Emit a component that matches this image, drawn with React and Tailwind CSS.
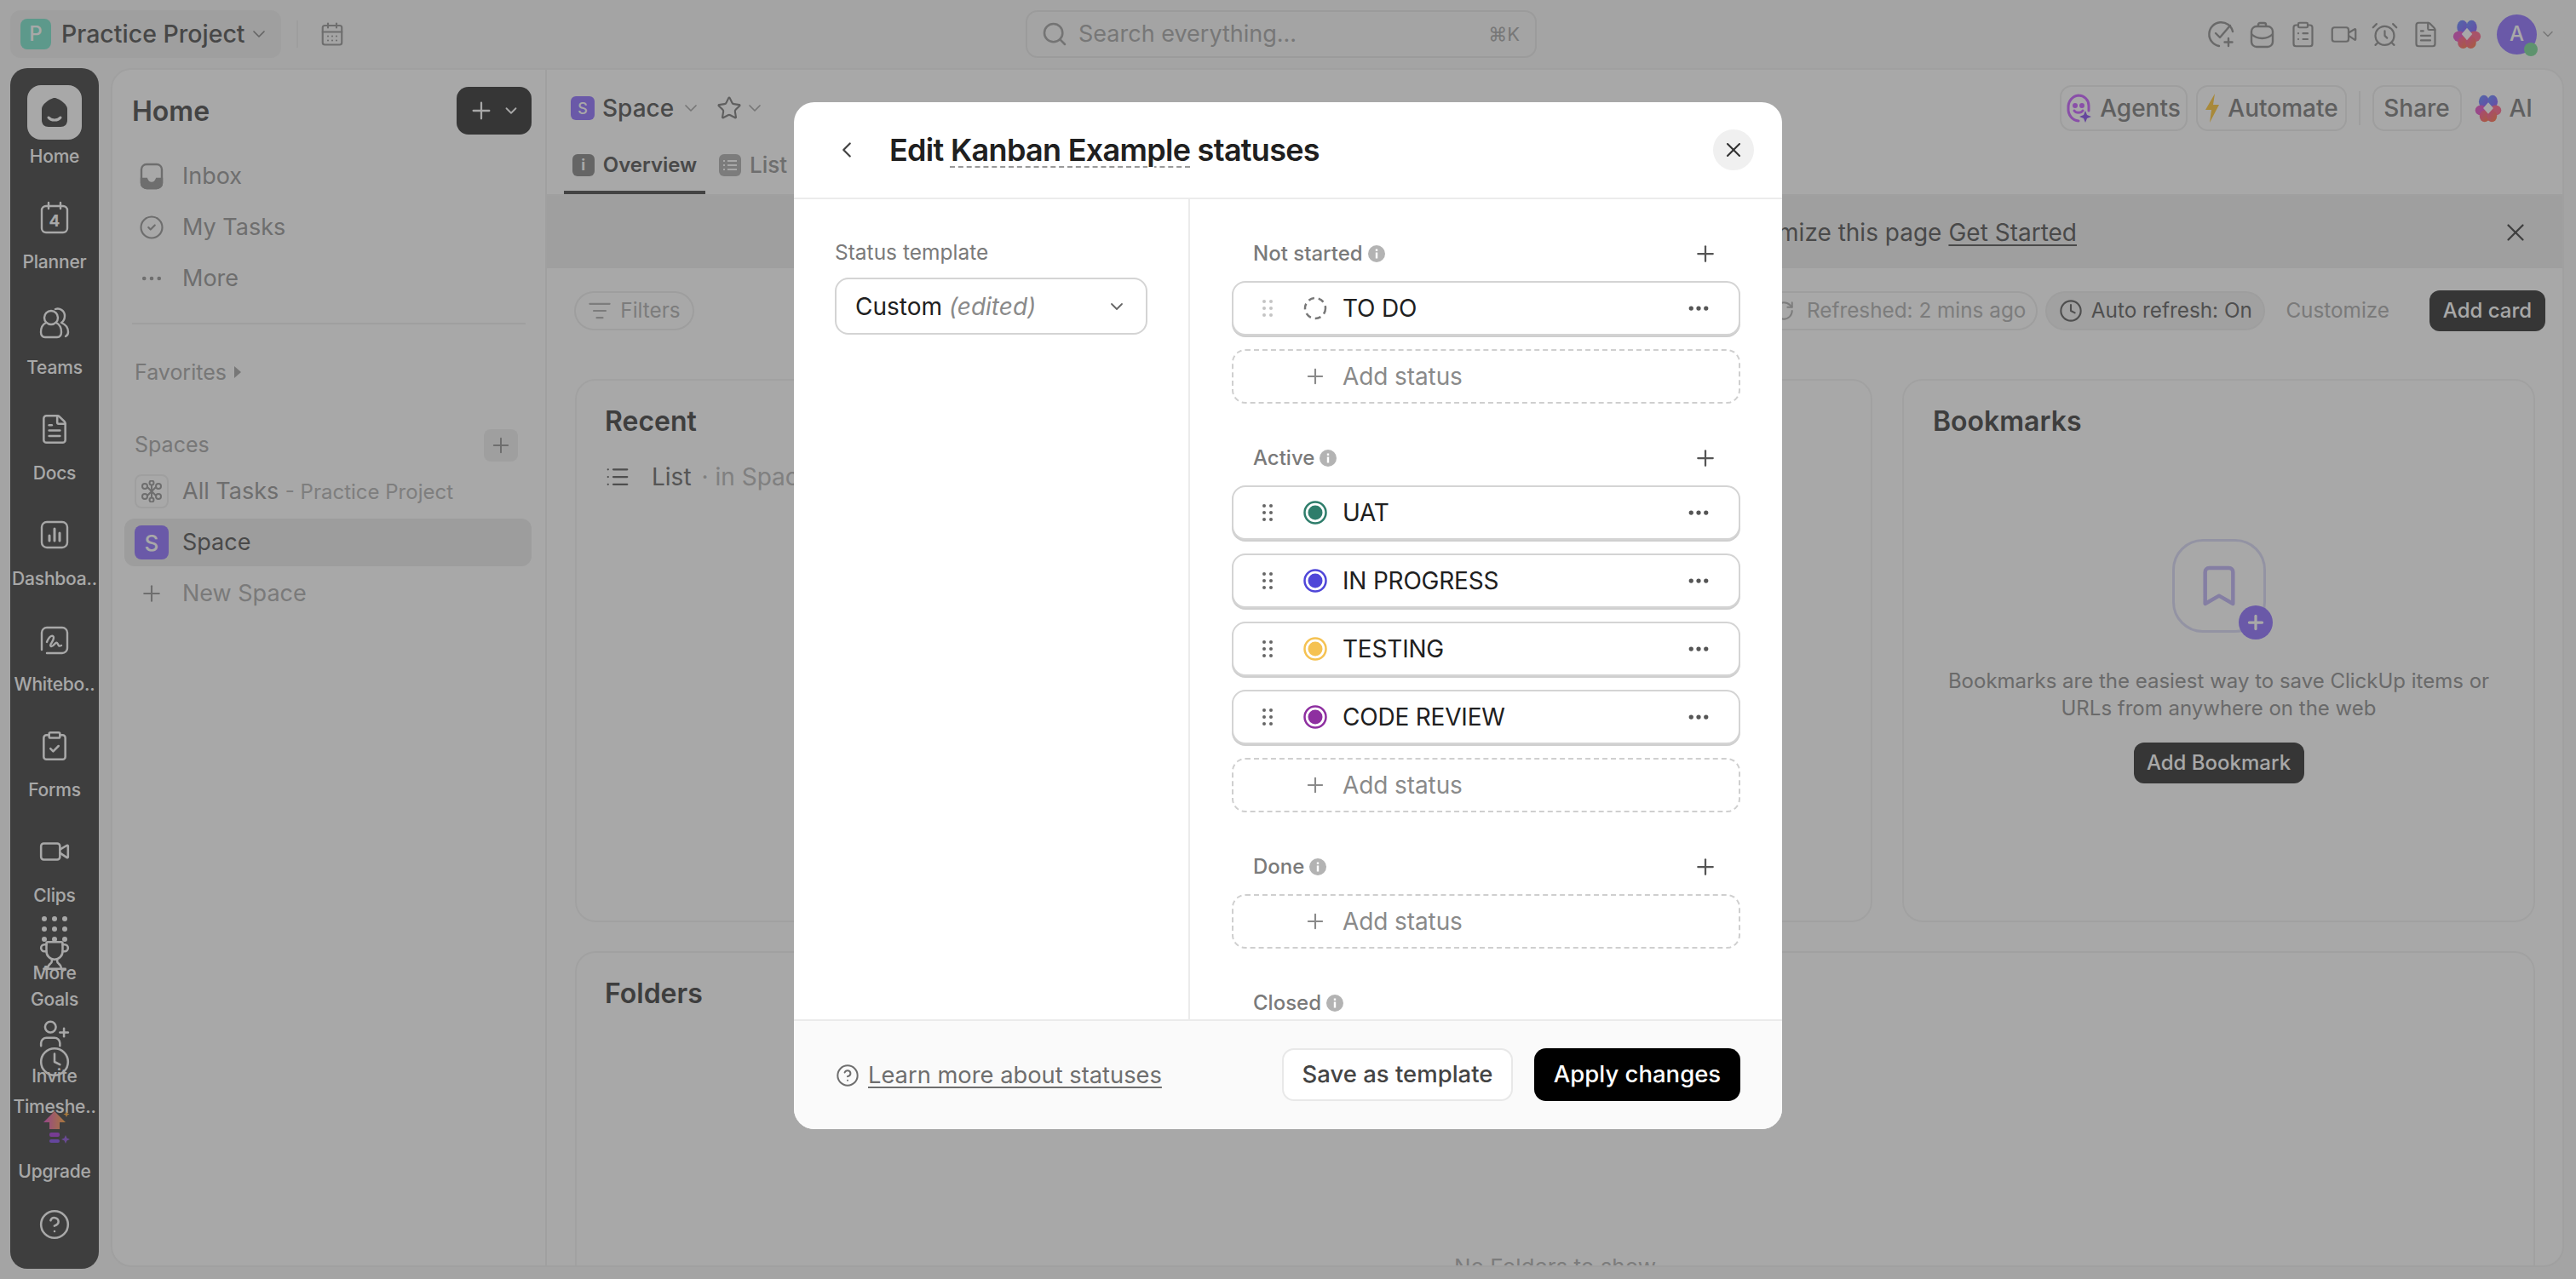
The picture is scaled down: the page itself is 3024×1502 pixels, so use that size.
import React from 'react';
import {
  AlarmClock, Bookmark, CalendarDays, ChevronDown, ChevronLeft, CircleHelp, ClipboardCheck, ClipboardList, Clock,
  Ellipsis, FileText, CircleCheck, List, ListFilter, Plus, RefreshCw, Search, Star, Trophy, UserPlus, Video, X,
} from 'lucide-react';

function Flower({ size = 36, id = 'a' }) {
  return (
    <svg width={size} height={size} viewBox="0 0 40 40">
      <defs>
        <linearGradient id={`${id}1`} x1="0" y1="0" x2="1" y2="1"><stop offset="0" stopColor="#7aa0ff" /><stop offset="1" stopColor="#a070ff" /></linearGradient>
        <linearGradient id={`${id}2`} x1="0" y1="0" x2="1" y2="1"><stop offset="0" stopColor="#ff6fb5" /><stop offset="1" stopColor="#ff8f5a" /></linearGradient>
      </defs>
      <ellipse cx="14" cy="11" rx="7" ry="9" fill={`url(#${id}1)`} />
      <ellipse cx="26" cy="11" rx="7" ry="9" fill={`url(#${id}1)`} />
      <ellipse cx="10" cy="23" rx="8" ry="7" fill="#e86fd0" />
      <ellipse cx="30" cy="23" rx="8" ry="7" fill="#ff7fa0" />
      <ellipse cx="15" cy="31" rx="7" ry="8" fill={`url(#${id}2)`} />
      <ellipse cx="25" cy="31" rx="7" ry="8" fill={`url(#${id}2)`} />
      <path d="M20 12 L27 20 L20 28 L13 20 Z" fill="#ffffff" />
    </svg>
  );
}

function RailLabel({ children, className = '' }) {
  return <div className={`h-7 w-full overflow-hidden whitespace-nowrap text-center text-[21px] font-medium leading-7 tracking-[-0.2px] text-white ${className}`}>{children}</div>;
}

function RailItem({ icon, label }) {
  return (
    <div className="flex h-[124px] flex-col items-center">
      <div className="flex h-16 w-16 items-center justify-center">{icon}</div>
      <RailLabel className="mt-[6px]">{label}</RailLabel>
    </div>
  );
}

function RailFloat({ icon, label, className, gap = 'mt-[18px]' }) {
  return (
    <div className={`absolute left-0 flex w-full flex-col items-center ${className}`}>
      <div className="flex h-10 items-center justify-center">{icon}</div>
      {label && <RailLabel className={gap}>{label}</RailLabel>}
    </div>
  );
}

const railIcon = { size: 38, strokeWidth: 1.6, color: '#ffffff' };

function Rail() {
  return (
    <aside className="relative h-[1410px] w-[104px] shrink-0 rounded-[20px] bg-[#5f5f5f] pt-5">
      <div className="flex h-[124px] flex-col items-center">
        <div className="flex h-16 w-16 items-center justify-center rounded-2xl bg-white">
          <svg width="38" height="38" viewBox="0 0 38 38">
            <path d="M19 2 C23 2 34 9 34 15 V28 C34 33 31 36 26 36 H12 C7 36 4 33 4 28 V15 C4 9 15 2 19 2 Z" fill="#5f5f5f" />
            <path d="M12 25 C15 29 23 29 26 25" fill="none" stroke="#ffffff" strokeWidth="3" strokeLinecap="round" />
          </svg>
        </div>
        <RailLabel className="mt-[6px]">Home</RailLabel>
      </div>
      <RailItem
        label="Planner"
        icon={
          <svg width="36" height="40" viewBox="0 0 36 40" fill="none" stroke="#fff" strokeWidth="2.4">
            <rect x="3" y="6" width="30" height="31" rx="5" />
            <path d="M11 2v7M25 2v7" strokeLinecap="round" />
            <text x="18" y="30" textAnchor="middle" fontSize="19" fontWeight="700" fill="#fff" stroke="none" fontFamily="Inter, sans-serif">4</text>
          </svg>
        }
      />
      <RailItem
        label="Teams"
        icon={
          <svg width="36" height="40" viewBox="0 0 36 40" fill="none" stroke="#fff" strokeWidth="2.4" strokeLinecap="round" strokeLinejoin="round">
            <circle cx="14" cy="13" r="8" />
            <path d="M8 19c-4 2-6 6-6 11 0 4 2 6 5 6h14c3 0 5-2 5-6 0-5-2-9-6-11" />
            <path d="M19 3c5-2 11 2 11 8 0 3-1 6-4 8 5 2 8 6 8 11 0 2-1 4-3 5" />
          </svg>
        }
      />
      <RailItem label="Docs" icon={<FileText {...railIcon} />} />
      <RailItem
        label="Dashboa.."
        icon={
          <svg width="36" height="36" viewBox="0 0 36 36" fill="none" stroke="#fff" strokeWidth="2.4" strokeLinecap="round">
            <rect x="3" y="3" width="30" height="30" rx="6" />
            <path d="M12 25v-6M18 25V11M24 25v-9" strokeWidth="3" />
          </svg>
        }
      />
      <RailItem
        label="Whitebo.."
        icon={
          <svg width="36" height="36" viewBox="0 0 36 36" fill="none" stroke="#fff" strokeWidth="2.4" strokeLinecap="round">
            <path d="M3 29V9a6 6 0 0 1 6-6h18a6 6 0 0 1 6 6v18a6 6 0 0 1-6 6H9" />
            <path d="M9 20c3-8 8-9 8-5s-6 9-3 10 5-6 7-4 1 5 5 3" />
          </svg>
        }
      />
      <RailItem label="Forms" icon={<ClipboardCheck {...railIcon} />} />
      <RailItem label="Clips" icon={<Video {...railIcon} />} />

      <RailFloat
        className="top-[991px]"
        label="More"
        icon={
          <svg width="30" height="30" viewBox="0 0 30 30" fill="#fff">
            {[3, 15, 27].flatMap((y) => [3, 15, 27].map((x) => <circle key={`${x}-${y}`} cx={x} cy={y} r="3" />))}
          </svg>
        }
      />
      <RailFloat className="top-[1022px]" label="Goals" icon={<Trophy {...railIcon} />} />
      <RailFloat className="top-[1114px]" label="Invite" gap="mt-4" icon={<UserPlus {...railIcon} />} />
      <RailFloat className="top-[1147px]" label="Timeshe.." gap="mt-[19px]" icon={<Clock {...railIcon} />} />
      <RailFloat
        className="top-[1225px]"
        label="Upgrade"
        gap="mt-[17px]"
        icon={
          <svg width="38" height="42" viewBox="0 0 38 42">
            <defs>
              <linearGradient id="up" x1="0" y1="0" x2="1" y2="0"><stop offset="0" stopColor="#e56bd0" /><stop offset="1" stopColor="#ffb85a" /></linearGradient>
            </defs>
            <path d="M19 1 L32 14 H25 V22 H13 V14 H6 Z" fill="url(#up)" />
            <rect x="13" y="26" width="12" height="5" rx="2" fill="#b55be0" />
            <rect x="13" y="34" width="12" height="4" rx="2" fill="#9a6bf0" />
            <path d="M32 29l1.500 3.500 3.500 1.500-3.500 1.500-1.500 3.500-1.500-3.500-3.500-1.500 3.500-1.500z" fill="#a070e0" />
            <path d="M33 1l1 2.500 2.500 1-2.500 1-1 2.500-1-2.500-2.500-1 2.500-1z" fill="#ffb85a" />
          </svg>
        }
      />
      <RailFloat className="top-[1338px]" icon={<CircleHelp {...railIcon} />} />
    </aside>
  );
}

function SideRow({ icon, children, active }) {
  return (
    <div className={`flex h-[56px] items-center rounded-xl pl-3 text-[27px] ${active ? 'bg-[#eeeeee] text-[#707070]' : 'text-[#a7a7a7]'}`}>
      <div className="flex w-10 justify-center">{icon}</div>
      <div className="ml-4 whitespace-nowrap">{children}</div>
    </div>
  );
}

function Sidebar() {
  const ic = { size: 30, strokeWidth: 1.7, color: '#a7a7a7' };
  return (
    <div className="flex w-[510px] shrink-0 flex-col border-r-2 border-[#f3f3f3] pl-[14px] pr-4">
      <div className="flex h-[76px] items-end justify-between pl-[9px]">
        <div className="pb-[7px] text-[32px] font-semibold leading-10 text-[#666666]">Home</div>
        <div className="flex h-14 w-[88px] items-center justify-center gap-2 rounded-[14px] bg-[#525252]">
          <Plus size={32} strokeWidth={1.7} color="#fff" />
          <ChevronDown size={22} strokeWidth={2} color="#fff" />
        </div>
      </div>
      <div className="mt-[21px] flex flex-col gap-[4px]">
        <SideRow
          icon={
            <svg width="28" height="32" viewBox="0 0 28 32" fill="none" stroke="#a7a7a7" strokeWidth="2.4">
              <rect x="2" y="2" width="24" height="28" rx="6" />
              <path d="M2 19h6c1 3 3 5 6 5s5-2 6-5h6v5a6 6 0 0 1-6 6H8a6 6 0 0 1-6-6z" fill="#a7a7a7" />
            </svg>
          }
        >
          Inbox
        </SideRow>
        <SideRow icon={<CircleCheck {...ic} />}>My Tasks</SideRow>
        <SideRow icon={<Ellipsis {...ic} />}>More</SideRow>
      </div>
      <div className="ml-[9px] mr-[7px] mt-[24px] h-[2px] bg-[#f2f2f2]" />
      <div className="mt-[40px] flex h-8 items-center gap-2 pl-3 text-[25px] leading-8 text-[#b5b5b5]">
        Favorites
        <svg width="10" height="16" viewBox="0 0 10 16"><path d="M1 1l8 7-8 7z" fill="#b5b5b5" /></svg>
      </div>
      <div className="mt-[51px] flex items-center justify-between pl-3 pr-4">
        <div className="text-[25px] text-[#b5b5b5]">Spaces</div>
        <div className="flex h-[38px] w-10 items-center justify-center rounded-lg bg-[#f2f2f2]">
          <Plus size={28} strokeWidth={1.7} color="#a7a7a7" />
        </div>
      </div>
      <div className="mt-[7px] flex flex-col gap-[4px]">
        <SideRow
          icon={
            <div className="flex h-10 w-10 items-center justify-center rounded-lg border-2 border-[#f2f2f2]">
              <svg width="26" height="26" viewBox="0 0 26 26" fill="none" stroke="#a7a7a7" strokeWidth="2">
                <path d="M13 13L6 6M13 13L20 6M13 13L6 20M13 13L20 20M13 4V13M13 13V22" />
                <circle cx="5" cy="7" r="3" fill="#ffffff" />
                <circle cx="21" cy="7" r="3" fill="#ffffff" />
                <circle cx="5" cy="19" r="3" fill="#ffffff" />
                <circle cx="21" cy="19" r="3" fill="#ffffff" />
                <circle cx="13" cy="3" r="2.500" fill="#ffffff" />
                <circle cx="13" cy="23" r="2.500" fill="#ffffff" />
              </svg>
            </div>
          }
        >
          All Tasks <span className="text-[24px] text-[#c0c0c0]">- Practice Project</span>
        </SideRow>
        <SideRow
          active
          icon={<div className="flex h-10 w-10 items-center justify-center rounded-lg bg-[#a188ff] text-[26px] font-medium text-white">S</div>}
        >
          Space
        </SideRow>
        <SideRow icon={<Plus {...ic} />}>
          <span className="text-[#b9b9b9]">New Space</span>
        </SideRow>
      </div>
    </div>
  );
}

function Chip({ children, className = '' }) {
  return <div className={`flex h-[54px] items-center rounded-[14px] border-2 border-[#f0f0f0] text-[28px] font-medium text-[#909090] ${className}`}>{children}</div>;
}

function Main() {
  return (
    <div className="flex min-w-0 flex-1 flex-col overflow-hidden">
      <div className="flex h-[72px] shrink-0 items-end justify-between pl-7">
        <div className="flex h-[54px] items-center">
          <div className="flex h-7 w-7 items-center justify-center rounded-md bg-[#a188ff] text-[18px] font-medium text-white">S</div>
          <div className="ml-[9px] text-[28px] font-medium text-[#707070]">Space</div>
          <ChevronDown className="ml-2" size={24} strokeWidth={1.7} color="#b5b5b5" />
          <Star className="ml-[18px]" size={30} strokeWidth={1.7} color="#909090" />
          <ChevronDown className="ml-[3px]" size={24} strokeWidth={1.7} color="#b5b5b5" />
        </div>
        <div className="flex items-center pr-[35px]">
          <Chip className="w-[150px] justify-center gap-[10px]">
            <svg width="30" height="36" viewBox="0 0 30 36" fill="none" strokeWidth="3" stroke="#d178ff">
              <path d="M15 3a12 12 0 0 1 12 12v6M15 33A13 14 0 0 1 3 18 13 14 0 0 1 15 3" strokeLinecap="round" />
              <circle cx="11" cy="15" r="1.500" fill="#d178ff" />
              <circle cx="19" cy="15" r="1.500" fill="#d178ff" />
              <path d="M10 21c2 3 8 3 10 0" strokeLinecap="round" />
              <path d="M23 21l2 5 5 2-5 2-2 5-2-5-5-2 5-2z" fill="#9a6bf0" stroke="none" />
            </svg>
            Agents
          </Chip>
          <Chip className="ml-[10px] w-[177px] justify-center gap-[8px]">
            <svg width="20" height="36" viewBox="0 0 20 36"><path d="M13 1 L2 20 H9 L7 35 L18 14 H11 Z" fill="#ffd158" /></svg>
            Automate
          </Chip>
          <div className="mx-[14px] h-10 w-[2px] bg-[#f0f0f0]" />
          <Chip className="w-[105px] justify-center">Share</Chip>
          <div className="ml-[14px] flex items-center gap-[8px] text-[28px] font-medium text-[#909090]">
            <Flower size={34} id="b" />
            AI
          </div>
        </div>
      </div>
      <div className="flex h-[76px] shrink-0 items-end gap-[2px] border-b-2 border-[#f3f3f3] pl-[20px]">
        <div className="flex h-[60px] w-[166px] items-center justify-center gap-[10px] border-b-[4px] border-[#666666] pb-[5px] text-[24px] font-semibold text-[#707070]">
          <div className="flex h-[26px] w-[26px] items-center justify-center rounded-md bg-[#9a9a9a] text-[18px] font-bold text-white">i</div>
          Overview
        </div>
        <div className="flex h-[60px] items-center gap-[10px] px-[14px] pb-[9px] text-[26px] font-medium text-[#a7a7a7]">
          <svg width="26" height="26" viewBox="0 0 26 26">
            <rect width="26" height="26" rx="6" fill="#bdbdbd" />
            <path d="M5 8h2M10 8h11M5 13h2M10 13h11M5 18h2M10 18h11" stroke="#fff" strokeWidth="2.200" />
          </svg>
          List
        </div>
      </div>
      <div className="flex h-[85px] shrink-0 items-center justify-end bg-[#f2f2f2] pr-[38px] text-[28px] text-[#707070]">
        <span>Add and arrange cards to customize this page</span>
        <span className="ml-2 underline underline-offset-4">Get Started</span>
        <X className="ml-[498px]" size={34} strokeWidth={1.6} color="#606060" />
      </div>
      <div className="flex h-[99px] shrink-0 items-center justify-between pl-[32px] pr-[20px] text-[24.3px]">
        <div className="flex h-[46px] w-[141px] items-center justify-center gap-[10px] rounded-full border-2 border-[#f0f0f0] text-[#bdbdbd]">
          <ListFilter size={28} strokeWidth={1.8} color="#bdbdbd" />
          Filters
        </div>
        <div className="flex items-center">
          <div className="flex h-[46px] items-center gap-[14px] rounded-full border-2 border-[#f0f0f0] px-3 text-[#bdbdbd]">
            <RefreshCw size={26} strokeWidth={1.8} color="#bdbdbd" />
            Refreshed: 2 mins ago
          </div>
          <div className="ml-[9px] flex h-[46px] w-[258px] items-center justify-center gap-[10px] rounded-full border-2 border-[#f0f0f0] bg-[#f5f5f5] text-[#787878]">
            <Clock size={28} strokeWidth={1.8} color="#787878" />
            Auto refresh: On
          </div>
          <div className="ml-[24px] text-[#b9b9b9]">Customize</div>
          <div className="ml-[47px] flex h-[48px] w-[136px] items-center justify-center rounded-xl bg-[#525252] text-[24px] font-medium text-white">Add card</div>
        </div>
      </div>
      <div className="flex-1 overflow-hidden pl-[33px] pr-[32px] pt-[31px]">
        <div className="grid grid-cols-[1523px_1fr] gap-x-[35px] gap-y-[34px]">
          <section className="h-[638px] rounded-3xl border-2 border-[#f5f5f5] px-[33px] pt-[28px]">
            <h2 className="text-[32px] font-semibold leading-10 text-[#5e5e5e]">Recent</h2>
            <div className="mt-[24px] flex items-center text-[28px]">
              <List size={30} strokeWidth={1.8} color="#777777" />
              <span className="ml-[25px] text-[#818181]">List</span>
              <span className="ml-3 text-[#c2c2c2]">· in Space</span>
            </div>
          </section>
          <section className="h-[638px] rounded-3xl border-2 border-[#f5f5f5] px-[34px] pt-[28px]">
            <h2 className="text-[32px] font-semibold leading-10 text-[#5e5e5e]">Bookmarks</h2>
            <div className="mt-[118px] flex flex-col items-center">
              <div className="relative flex h-[110px] w-[110px] items-center justify-center rounded-[36px] border-[3px] border-[#e0e0f8]">
                <Bookmark size={56} strokeWidth={1.9} color="#c8bff8" />
                <div className="absolute -bottom-[11px] -right-[11px] flex h-10 w-10 items-center justify-center rounded-full bg-[#a188ff]">
                  <Plus size={26} strokeWidth={3} color="#fff" />
                </div>
              </div>
              <p className="mt-[41px] text-center text-[24px] leading-8 text-[#a1a1a1]">
                Bookmarks are the easiest way to save ClickUp items or
                <br />
                URLs from anywhere on the web
              </p>
              <div className="mt-[24px] flex h-12 w-[200px] items-center justify-center rounded-xl bg-[#525252] text-[24px] font-medium text-white">Add Bookmark</div>
            </div>
          </section>
          <section className="col-span-2 h-[420px] rounded-t-3xl border-2 border-b-0 border-[#f5f5f5] px-[33px] pt-[28px]">
            <h2 className="text-[32px] font-semibold leading-10 text-[#5e5e5e]">Folders</h2>
            <div className="mt-[281px] text-center text-[26px] text-[#bdbdbd]">No Folders to show</div>
          </section>
        </div>
      </div>
    </div>
  );
}

function TopBar() {
  const ic = { size: 33, strokeWidth: 1.6, color: '#a0a0a0' };
  return (
    <header className="flex h-20 items-center bg-[#f9f9f9]">
      <div className="flex w-[1204px] shrink-0 items-center pl-3">
        <div className="flex h-14 w-[318px] items-center rounded-xl bg-[#f2f2f2] pl-3">
          <div className="flex h-9 w-9 items-center justify-center rounded-lg bg-[#8de9d4] text-[24px] font-medium text-white">P</div>
          <div className="ml-3 whitespace-nowrap text-[28.5px] font-medium text-[#6c6c6c]">Practice Project</div>
          <ChevronDown className="ml-1" size={24} strokeWidth={1.7} color="#9a9a9a" />
        </div>
        <div className="ml-[18px] h-8 w-[2px] bg-[#f0f0f0]" />
        <CalendarDays className="ml-[25px]" size={30} strokeWidth={1.7} color="#a7a7a7" />
      </div>
      <div className="flex h-14 w-[600px] shrink-0 items-center rounded-[14px] border-2 border-[#ececec] pl-4 pr-[18px]">
        <Search size={32} strokeWidth={1.9} color="#b0b0b0" />
        <div className="ml-3 flex-1 text-[27px] text-[#b5b5b5]">Search everything...</div>
        <div className="text-[22px] text-[#b5b5b5]">⌘K</div>
      </div>
      <div className="flex flex-1 items-center justify-end pr-[23px]">
        <div className="flex items-center gap-[15px]">
          <svg width="33" height="33" viewBox="0 0 33 33" fill="none" stroke="#a0a0a0" strokeWidth="2.400" strokeLinecap="round" strokeLinejoin="round">
            <path d="M30 13A14 14 0 1 0 14 30" />
            <path d="M10 15l5 5 12-14" />
            <path d="M25 21v9M20.500 25.500h9" />
          </svg>
          <svg width="33" height="33" viewBox="0 0 33 33" fill="none" stroke="#a0a0a0" strokeWidth="2.400" strokeLinejoin="round">
            <path d="M12 7V5a2 2 0 0 1 2-2h5a2 2 0 0 1 2 2v2" />
            <rect x="4" y="7" width="25" height="24" rx="6" />
            <path d="M4 16c4 4 8 5 12.500 5S25 20 29 16" />
          </svg>
          <ClipboardList {...ic} />
          <Video {...ic} />
          <AlarmClock {...ic} />
          <FileText {...ic} />
        </div>
        <div className="ml-[14px]">
          <Flower size={36} id="c" />
        </div>
        <div className="relative ml-[17px] flex h-[47px] w-[47px] items-center justify-center rounded-full bg-[#a188ff] text-[24px] font-medium text-white">
          A
          <div className="absolute -bottom-[2px] -right-[1px] h-4 w-4 rounded-full bg-[#8fe0a8]" />
        </div>
        <ChevronDown className="ml-[3px]" size={20} strokeWidth={1.8} color="#b5b5b5" />
      </div>
    </header>
  );
}

function InfoDot() {
  return (
    <svg width="20" height="20" viewBox="0 0 20 20">
      <circle cx="10" cy="10" r="10" fill="#b3b3b3" />
      <rect x="8.800" y="8.500" width="2.400" height="7" fill="#fff" />
      <rect x="8.800" y="4.500" width="2.400" height="2.400" fill="#fff" />
    </svg>
  );
}

function Grip({ color }) {
  return (
    <svg width="14" height="22" viewBox="0 0 14 22" fill={color}>
      {[3, 11, 19].flatMap((y) => [3, 11].map((x) => <circle key={`${x}-${y}`} cx={x} cy={y} r="2" />))}
    </svg>
  );
}

function SectionHead({ title, plus = true }) {
  return (
    <div className="mb-3 flex h-10 items-center justify-between pl-[25px] pr-[26px]">
      <div className="flex items-center gap-[6px] text-[24px] font-medium text-[#7a7a7a]">
        {title}
        <InfoDot />
      </div>
      {plus && <Plus size={30} strokeWidth={1.8} color="#555555" />}
    </div>
  );
}

function StatusRow({ name, color, dashed }) {
  return (
    <div className="flex h-16 items-center rounded-2xl border-2 border-[#d4d4d4] bg-white pl-[33px] pr-[32px] shadow-[0_2px_0_#cfcfcf]">
      <Grip color={dashed ? '#c4c4c4' : '#666666'} />
      <div className="ml-[35px] flex h-[28px] w-[28px] items-center justify-center">
        {dashed ? (
          <svg width="28" height="28" viewBox="0 0 28 28">
            <circle cx="14" cy="14" r="12" fill="none" stroke="#777777" strokeWidth="2.500" strokeDasharray="7 5" />
          </svg>
        ) : (
          <svg width="28" height="28" viewBox="0 0 28 28">
            <circle cx="14" cy="14" r="12.500" fill="none" stroke={color} strokeWidth="2.500" />
            <circle cx="14" cy="14" r="8.500" fill={color} />
          </svg>
        )}
      </div>
      <div className="ml-[18px] flex-1 text-[28px] tracking-[-0.2px] text-[#202020]">{name}</div>
      <Ellipsis size={30} strokeWidth={2.2} color="#555555" />
    </div>
  );
}

function AddRow() {
  return (
    <div className="flex h-16 items-center rounded-2xl border-2 border-dashed border-[#cfcfcf] pl-[82px] text-[28px] tracking-[-0.1px] text-[#8a8a8a]">
      <Plus size={28} strokeWidth={1.8} color="#8a8a8a" />
      <div className="ml-[18px]">Add status</div>
    </div>
  );
}

function Modal() {
  return (
    <div className="absolute left-[932px] top-[120px] flex h-[1206px] w-[1160px] flex-col overflow-hidden rounded-3xl bg-white">
      <div className="flex h-[114px] shrink-0 items-center border-b-2 border-[#ebebeb] pl-[47px] pr-[33px]">
        <ChevronLeft size={30} strokeWidth={1.8} color="#444444" />
        <h1 className="ml-[35px] flex-1 text-[36px] font-semibold tracking-[-0.7px] text-[#202020]">
          Edit <span className="underline decoration-[#999999] decoration-dashed decoration-2 underline-offset-[6px]">Kanban Example</span> statuses
        </h1>
        <div className="flex h-12 w-12 items-center justify-center rounded-full bg-[#f0f0f0]">
          <X size={28} strokeWidth={1.8} color="#333333" />
        </div>
      </div>
      <div className="flex min-h-0 flex-1">
        <div className="w-[465px] shrink-0 border-r-2 border-[#ebebeb] pl-[48px] pr-[48px] pt-[44px]">
          <div className="text-[24.5px] leading-9 text-[#7a7a7a]">Status template</div>
          <div className="mt-[12px] flex h-[67px] items-center justify-between rounded-2xl border-2 border-[#d4d4d4] pl-[22px] pr-[22px] text-[28px]">
            <div className="text-[#202020]">
              Custom <em className="text-[#8a8a8a]">(edited)</em>
            </div>
            <ChevronDown size={24} strokeWidth={1.8} color="#666666" />
          </div>
        </div>
        <div className="min-w-0 flex-1 overflow-hidden pl-[49px] pr-[49px] pt-[44px]">
          <SectionHead title="Not started" />
          <div className="flex flex-col gap-4">
            <StatusRow name="TO DO" dashed />
            <AddRow />
          </div>
          <div className="h-11" />
          <SectionHead title="Active" />
          <div className="flex flex-col gap-4">
            <StatusRow name="UAT" color="#2e7d6b" />
            <StatusRow name="IN PROGRESS" color="#4f46d8" />
            <StatusRow name="TESTING" color="#f5c252" />
            <StatusRow name="CODE REVIEW" color="#8e2fa0" />
            <AddRow />
          </div>
          <div className="h-11" />
          <SectionHead title="Done" />
          <AddRow />
          <div className="h-11" />
          <SectionHead title="Closed" plus={false} />
        </div>
      </div>
      <div className="flex h-[129px] shrink-0 items-center justify-between border-t-2 border-[#ebebeb] bg-[#fafafa] pb-[2px] pl-[49px] pr-[49px]">
        <div className="mt-[3px] flex items-center gap-[10px] text-[27.3px] text-[#6e6e6e]">
          <CircleHelp size={28} strokeWidth={1.7} color="#6e6e6e" />
          <span className="underline underline-offset-4">Learn more about statuses</span>
        </div>
        <div className="flex items-center gap-[25px] text-[27.5px] font-medium">
          <div className="flex h-[62px] w-[271px] items-center justify-center rounded-[14px] border-2 border-[#e8e8e8] bg-white text-[#444444]">Save as template</div>
          <div className="flex h-[62px] w-[242px] items-center justify-center rounded-[14px] bg-black text-white">Apply changes</div>
        </div>
      </div>
    </div>
  );
}

export default function App() {
  return (
    <div className="relative h-[1502px] w-[3024px] overflow-hidden bg-[#f9f9f9] font-[Inter,sans-serif]">
      <TopBar />
      <div className="flex gap-[14px] pl-3 pr-[14px]">
        <Rail />
        <div className="flex h-[1408px] flex-1 overflow-hidden rounded-3xl border-2 border-[#f3f3f3] bg-white">
          <Sidebar />
          <Main />
        </div>
      </div>
      <div className="absolute inset-0 bg-black/[0.34]" />
      <Modal />
    </div>
  );
}
